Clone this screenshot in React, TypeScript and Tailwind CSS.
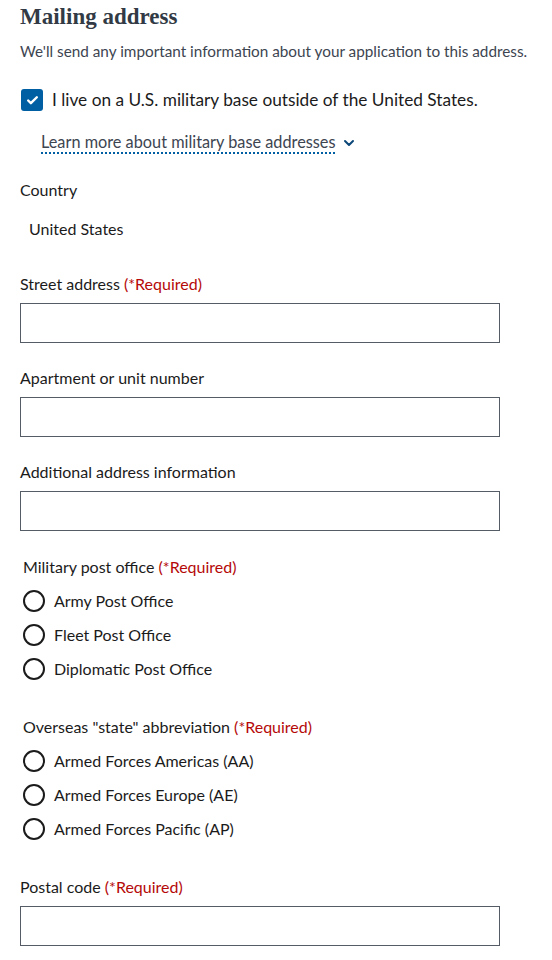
import { ChevronDown, Check } from "lucide-react";

function TextField({ label, required }: { label: string; required?: boolean }) {
  return (
    <div>
      <label className="block leading-6 text-[16px] text-[#1b1b1b]">
        {label}
        {required && <span className="text-[#b50909]"> (*Required)</span>}
      </label>
      <input className="mt-[7px] block w-[480px] h-10 border border-[#565c65] bg-white px-2" />
    </div>
  );
}

function Radio({ label }: { label: string }) {
  return (
    <div className="flex items-center h-6 pl-[3px]">
      <span className="w-[22px] h-[22px] rounded-full border-2 border-[#1b1b1b] bg-white" />
      <span className="ml-[9px] leading-6 text-[16px] text-[#1b1b1b]">{label}</span>
    </div>
  );
}

function RadioGroup({ label, options }: { label: string; options: string[] }) {
  return (
    <fieldset>
      <legend className="pl-[3px] leading-6 text-[16px] text-[#1b1b1b]">
        {label}
        <span className="text-[#b50909]"> (*Required)</span>
      </legend>
      <div className="mt-[10px] flex flex-col gap-[10px]">
        {options.map((o) => (
          <Radio key={o} label={o} />
        ))}
      </div>
    </fieldset>
  );
}

export default function App() {
  return (
    <div className="min-h-screen bg-white px-5 pt-[3px] pb-6 font-['Lato',sans-serif] text-[#1b1b1b]">
      {/* Header */}
      <h2 className="font-['Liberation_Serif',serif] font-bold text-[23px] leading-[28px] text-[#323a45]">
        Mailing address
      </h2>
      <p className="mt-2 text-[15.3px] leading-6 text-[#3d4551]">
        We'll send any important information about your application to this address.
      </p>

      {/* Military base checkbox */}
      <div className="mt-[25px] flex items-center h-6 pl-px">
        <span className="w-[22px] h-[22px] rounded-[3px] bg-[#005ea2] flex items-center justify-center">
          <Check className="w-[13px] h-[13px] text-white" strokeWidth={4.5} />
        </span>
        <span className="ml-[9px] text-[17.25px] leading-6">
          I live on a U.S. military base outside of the United States.
        </span>
      </div>

      <div className="mt-5 pl-[21px] flex items-center">
        <span className="leading-5 text-[16.3px] text-[#3d4551] border-b-2 border-dotted border-[#005ea2]">
          Learn more about military base addresses
        </span>
        <ChevronDown className="ml-[6px] w-4 h-4 text-[#0b4778]" strokeWidth={3} />
      </div>

      {/* Country */}
      <div className="mt-6 leading-6 text-[16px]">Country</div>
      <div className="mt-[15px] pl-[9px] leading-6 text-[16px]">United States</div>

      <div className="mt-[31px]">
        <TextField label="Street address" required />
      </div>
      <div className="mt-[23px]">
        <TextField label="Apartment or unit number" />
      </div>
      <div className="mt-[23px]">
        <TextField label="Additional address information" />
      </div>

      <div className="mt-6">
        <RadioGroup
          label="Military post office"
          options={["Army Post Office", "Fleet Post Office", "Diplomatic Post Office"]}
        />
      </div>
      <div className="mt-[34px]">
        <RadioGroup
          label={'Overseas "state" abbreviation'}
          options={["Armed Forces Americas (AA)", "Armed Forces Europe (AE)", "Armed Forces Pacific (AP)"]}
        />
      </div>

      <div className="mt-[34px]">
        <TextField label="Postal code" required />
      </div>
    </div>
  );
}
